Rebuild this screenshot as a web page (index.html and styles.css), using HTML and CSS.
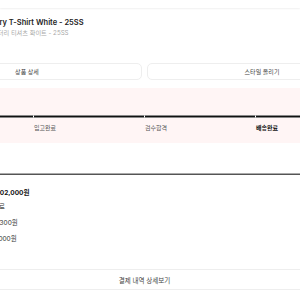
FILE: index.html
```html
<!DOCTYPE html>
<html lang="ko">
<head>
  <meta charset="UTF-8" />
  <meta name="viewport" content="width=device-width, initial-scale=1.0"/>
  <title>주문 상세</title>
  <link rel="stylesheet" href="styles.css">
</head>
<body>

<div class="topbar"></div>

<div class="page">
  <div class="product">
    <div class="thumb"></div>
    <div class="product-info">
      <div class="product-name">Embroidery T-Shirt White - 25SS</div>
      <div class="product-name-ko">엠브로이더리 티셔츠 화이트 - 25SS</div>
    </div>
  </div>

  <div class="actions">
    <button class="action-btn">상품 상세</button>
    <button class="action-btn">스타일 올리기</button>
  </div>

  <div class="progress-box">
    <div class="steps">
      <div class="step"><div class="bar"></div><span>구매확정</span></div>
      <div class="step"><div class="bar"></div><span>입고완료</span></div>
      <div class="step"><div class="bar"></div><span>검수합격</span></div>
      <div class="step current"><div class="bar"></div><span>배송완료</span></div>
    </div>
  </div>

  <div class="divider"></div>

  <div class="pay">
    <div class="pay-total">102,000원</div>
    <div class="pay-row fee-label">배송료</div>
    <div class="pay-row fee">3,300원</div>
    <div class="pay-row price">100,000원</div>
  </div>

  <button class="history-btn">결제 내역 상세보기</button>
</div>

</body>
</html>
```

FILE: styles.css
```css
body {
  margin: 0;
  background: #fff;
  font-family: "Inter", "Noto Sans CJK KR", sans-serif;
  overflow: hidden;
}
.topbar {
  height: 8px;
  background: #fff;
  box-shadow: 0 1px 2px rgba(0, 0, 0, 0.06);
}
.page {
  margin-left: -98px;
  width: 465px;
  padding: 0 10px;
}
.product {
  display: flex;
  gap: 8px;
  padding: 10px 0 0 0;
  height: 45px;
}
.thumb {
  width: 45px;
  height: 28px;
}
.product-name {
  font-size: 7.5px;
  font-weight: 600;
  color: #222;
  line-height: 10px;
}
.product-name-ko {
  font-size: 6.2px;
  color: #aaa;
  line-height: 9px;
  margin-left: 10px;
}
.actions {
  display: flex;
  gap: 5px;
}
.action-btn {
  flex: 1;
  height: 17px;
  background: #fff;
  border: 1px solid #eee;
  border-radius: 5px;
  font-family: inherit;
  font-size: 6px;
  color: #444;
  padding: 0;
}
.progress-box {
  margin: 8px -10px 0;
  height: 55px;
  background: #fff5f5;
  padding: 0 21px 0 20px;
}
.steps {
  display: flex;
  padding-top: 27px;
}
.step {
  flex: 1;
  font-size: 6px;
  color: #555;
  line-height: 9px;
}
.step .bar {
  height: 1px;
  background: #111;
  border-top: 1px solid #888;
  border-bottom: 1px solid #888;
  border-left: 1px solid #fff;
  margin-bottom: 5px;
}
.step span {
  padding-left: 1px;
}
.step.current {
  color: #111;
  font-weight: 700;
}
.divider {
  margin: 30px -10px 0;
  border-top: 1px solid #aaa;
  border-bottom: 1px solid #555;
}
.pay {
  padding-top: 13px;
  font-size: 6.5px;
  color: #333;
}
.pay-total {
  font-weight: 700;
  color: #111;
  line-height: 10px;
  margin-left: 85px;
  margin-bottom: 4px;
}
.pay-row {
  line-height: 10px;
  margin-bottom: 6px;
}
.fee-label {
  margin-left: 75px;
}
.fee {
  margin-left: 82px;
}
.price {
  margin-left: 74px;
}
.history-btn {
  display: block;
  margin: 25px -10px 0;
  width: 485px;
  height: 21px;
  background: #fff;
  border: none;
  border-top: 1px solid #eee;
  border-bottom: 1px solid #eee;
  font-family: inherit;
  font-size: 6.5px;
  color: #444;
}
```
